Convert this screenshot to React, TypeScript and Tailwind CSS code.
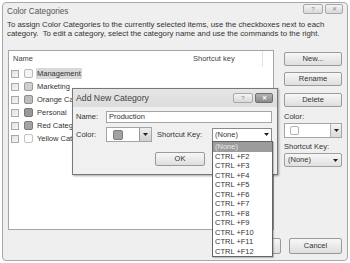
import React from 'react';

const font = { fontFamily: '"Liberation Sans", Arial, sans-serif' };

function Btn({ label, className = '' }: { label: string; className?: string }) {
  return (
    <div
      className={
        'flex items-center justify-center rounded-[2px] border border-[#9a9a9a] bg-gradient-to-b from-[#f7f7f7] to-[#dedede] text-[7.5px] text-[#333] ' +
        className
      }
    >
      {label}
    </div>
  );
}

function Arrow() {
  return (
    <svg width="5" height="3" viewBox="0 0 5 3">
      <path d="M0 0 H5 L2.5 3 Z" fill="#222" />
    </svg>
  );
}

function TitleButtons({ dark }: { dark?: boolean }) {
  return (
    <div className="flex gap-[2px]">
      <div className="flex h-[10px] w-[20px] items-center justify-center rounded-[2px] border border-[#a8a8a8] bg-gradient-to-b from-[#f4f4f4] to-[#d8d8d8] text-[6px] text-[#888]">
        ?
      </div>
      <div
        className={
          dark
            ? 'flex h-[10px] w-[18px] items-center justify-center rounded-[2px] border border-[#707070] bg-gradient-to-b from-[#b4b4b4] to-[#8a8a8a] text-[6px] font-bold text-white'
            : 'flex h-[10px] w-[18px] items-center justify-center rounded-[2px] border border-[#a8a8a8] bg-gradient-to-b from-[#f4f4f4] to-[#d8d8d8] text-[6px] text-[#888]'
        }
      >
        ✕
      </div>
    </div>
  );
}

const categories = [
  { name: 'Management', swatch: 'bg-[#f4f4f4] border-[#b8b8b8]', selected: true },
  { name: 'Marketing', swatch: 'bg-[#cfcfcf] border-[#9c9c9c]' },
  { name: 'Orange Category', swatch: 'bg-[#bdbdbd] border-[#8e8e8e]' },
  { name: 'Personal', swatch: 'bg-[#999999] border-[#777777]' },
  { name: 'Red Category', swatch: 'bg-[#a3a3a3] border-[#7c7c7c]' },
  { name: 'Yellow Category', swatch: 'bg-[#fbfbfb] border-[#c4c4c4]' },
];

const keys = ['(None)', 'CTRL +F2', 'CTRL +F3', 'CTRL +F4', 'CTRL +F5', 'CTRL +F6', 'CTRL +F7', 'CTRL +F8', 'CTRL +F9', 'CTRL +F10', 'CTRL +F11', 'CTRL +F12'];

export default function App() {
  return (
    <div className="relative h-[263px] w-[350px] overflow-hidden bg-white pl-[2px] pt-[2px] text-[#333]" style={font}>
      {/* Color Categories window */}
      <div className="flex h-[259px] w-[346px] flex-col rounded-[4px] border border-[#a8a8a8] bg-[#efefef]">
        <div className="flex h-[17px] shrink-0 items-start px-[4px]">
          <span className="mt-[4px] text-[8.2px] leading-[9px] text-[#555]">Color Categories</span>
          <div className="ml-auto mt-[1px]">
            <TitleButtons />
          </div>
        </div>

        <p className="pl-[4px] pt-[1px] text-[7.8px] leading-[8.5px]">
          To assign Color Categories to the currently selected items, use the checkboxes next to each
          <br />
          category.&nbsp; To edit a category, select the category name and use the commands to the right.
        </p>

        <div className="mt-[12px] flex gap-[10px] pl-[5px]">
          {/* list */}
          <div className="h-[180px] w-[266px] border border-[#a5a5a5] bg-white">
            <div className="flex h-[16px] items-center text-[7.5px] text-[#444]">
              <div className="w-[180px] pl-[4px]">Name</div>
              <div className="h-full w-[74px] border-r border-[#e2e2e2] pl-[4px] leading-[16px]">Shortcut key</div>
            </div>
            {categories.map((c) => (
              <div key={c.name} className="flex h-[13px] items-center pl-[2px] text-[7.5px]">
                <div className="h-[8px] w-[8px] border border-[#a9a9a9] bg-gradient-to-br from-[#e2e2e2] to-[#f6f6f6]" />
                <div className={'ml-[5px] h-[9px] w-[9px] rounded-[2px] border ' + c.swatch} />
                <span
                  className={
                    c.selected
                      ? 'ml-[3px] bg-[#d9d9d9] px-[1px] leading-[11px]'
                      : 'ml-[3px] px-[1px] leading-[11px]'
                  }
                >
                  {c.name}
                </span>
              </div>
            ))}
          </div>

          {/* right commands */}
          <div className="flex w-[58px] flex-col pt-[2px] text-[7.5px]">
            <Btn label="New..." className="h-[14px]" />
            <Btn label="Rename" className="mt-[6px] h-[14px]" />
            <Btn label="Delete" className="mt-[7px] h-[14px]" />
            <div className="mt-[5px] leading-[9px]">Color:</div>
            <div className="mt-[2px] flex h-[15px] items-center border border-[#a5a5a5] bg-white">
              <div className="ml-[5px] h-[9px] w-[9px] rounded-[2px] border border-[#b4b4b4] bg-white" />
              <div className="ml-auto flex h-full w-[11px] items-center justify-center border-l border-[#b0b0b0] bg-gradient-to-b from-[#f4f4f4] to-[#dadada]">
                <Arrow />
              </div>
            </div>
            <div className="mt-[4px] leading-[9px]">Shortcut Key:</div>
            <div className="mt-[2px] flex h-[14px] items-center justify-between rounded-[2px] border border-[#a0a0a0] bg-gradient-to-b from-[#f7f7f7] to-[#e0e0e0] px-[3px]">
              <span>(None)</span>
              <Arrow />
            </div>
          </div>
        </div>

        <div className="mt-[8px] flex justify-end gap-[8px] pr-[5px]">
          <Btn label="OK" className="h-[16px] w-[53px]" />
          <Btn label="Cancel" className="h-[16px] w-[53px]" />
        </div>
      </div>

      {/* Add New Category dialog */}
      <div className="absolute left-[72px] top-[88px] flex h-[87px] w-[206px] flex-col border border-[#777] bg-[#f0f0f0] shadow-[1px_1px_2px_rgba(0,0,0,0.35)]">
        <div className="flex h-[18px] shrink-0 items-start bg-gradient-to-b from-[#e6e6e6] to-[#dcdcdc] pl-[3px] pr-[4px]">
          <span className="mt-[5px] text-[8.7px] leading-[9px] text-[#444]">Add New Category</span>
          <div className="ml-auto mt-[4px]">
            <TitleButtons dark />
          </div>
        </div>
        <div className="flex flex-col pl-[3px] text-[7.5px]">
          <div className="mt-[4px] flex items-center">
            <span className="w-[30px]">Name:</span>
            <div className="flex h-[12px] w-[166px] items-center border border-[#a5a5a5] bg-white pl-[2px]">Production</div>
          </div>
          <div className="mt-[4px] flex items-center">
            <span className="w-[30px]">Color:</span>
            <div className="flex h-[15px] w-[46px] items-center border border-[#a5a5a5] bg-white">
              <div className="ml-[6px] h-[10px] w-[10px] rounded-[2px] border border-[#7e7e7e] bg-[#a2a2a2]" />
              <div className="ml-auto flex h-full w-[12px] items-center justify-center border-l border-[#9a9a9a] bg-gradient-to-b from-[#eeeeee] to-[#cfcfcf]">
                <Arrow />
              </div>
            </div>
            <span className="ml-[5px] w-[55px]">Shortcut Key:</span>
            <div className="flex h-[14px] w-[60px] items-center justify-between border border-[#8a8a8a] bg-white px-[2px]">
              <span>(None)</span>
              <Arrow />
            </div>
          </div>
          <Btn label="OK" className="ml-[79px] mt-[10px] h-[14px] w-[50px]" />
        </div>
      </div>

      {/* open shortcut dropdown */}
      <div className="absolute left-[212px] top-[141px] w-[61px] border border-[#646464] bg-white text-[7.5px] shadow-[1px_1px_1px_rgba(0,0,0,0.2)]">
        {keys.map((k, i) => (
          <div
            key={k}
            className={i === 0 ? 'bg-[#9c9c9c] pl-[2px] leading-[9.5px] text-[#eaeaea]' : 'pl-[2px] leading-[9.5px] text-[#333]'}
          >
            {k}
          </div>
        ))}
      </div>
    </div>
  );
}
